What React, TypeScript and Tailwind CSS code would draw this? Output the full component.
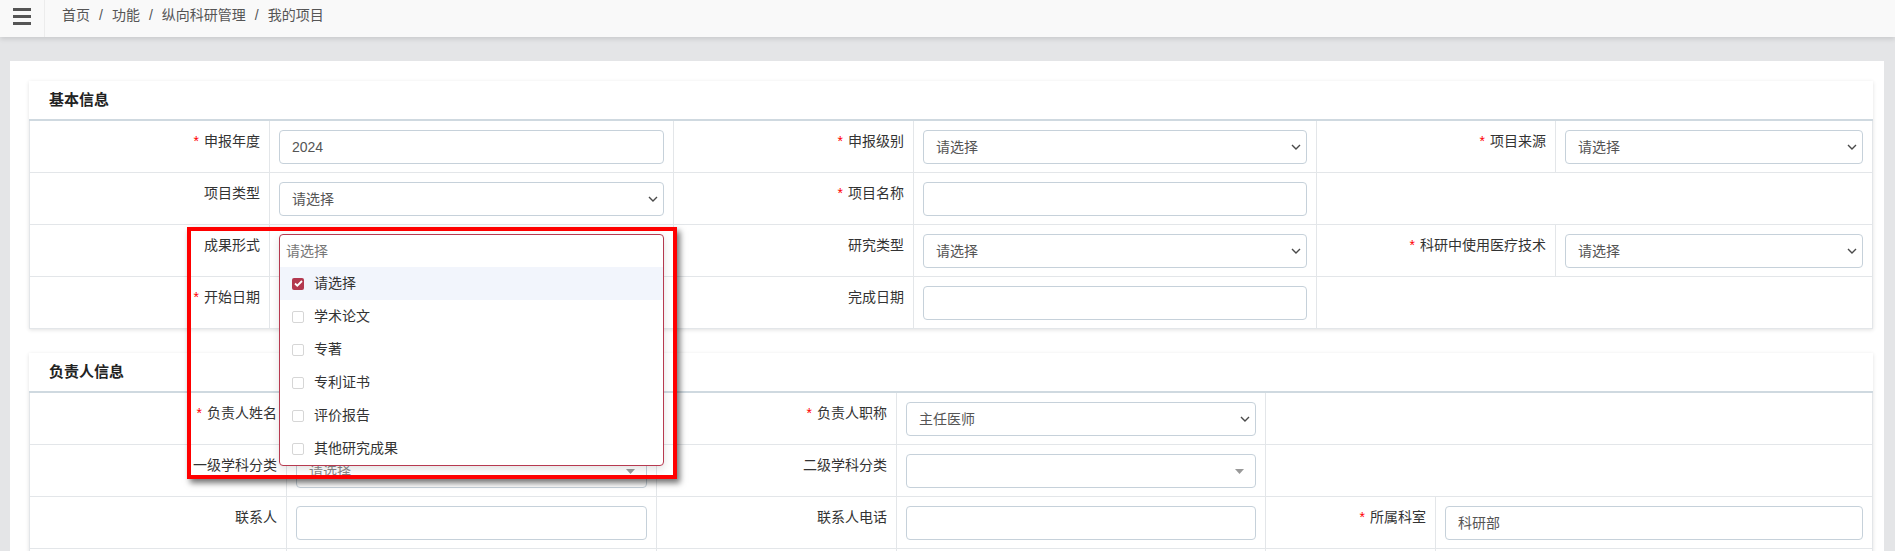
import React from "react";

const B = "border-[#e3e6e9]";

function Req() {
  return <span className="text-[#ff0000] mr-[5px]">*</span>;
}

function Label({ text, req }: { text: string; req?: boolean }) {
  return (
    <div className="border-r border-b border-[#e3e6e9] pr-[9px] pt-[10px] text-right text-[14px] leading-[20px] text-[#333] whitespace-nowrap">
      {req && <Req />}
      {text}
    </div>
  );
}

function Field({ children, last, relative }: { children?: React.ReactNode; last?: boolean; relative?: boolean }) {
  return (
    <div
      className={`border-b border-[#e3e6e9] pt-[9px] pb-[8px] px-[9px] ${last ? "" : "border-r"} ${relative ? "relative" : ""}`}
    >
      {children}
    </div>
  );
}

function Span2() {
  return <div className="col-span-2 border-b border-[#e3e6e9] h-[52px]" />;
}

function TextBox({ value }: { value?: string }) {
  return (
    <div className="h-[34px] rounded-[4px] border border-[#c6d1da] px-[12px] flex items-center text-[14px] text-[#555]">
      {value}
    </div>
  );
}

function SelectBox({ value }: { value: string }) {
  return (
    <div className="h-[34px] rounded-[4px] border border-[#c6d1da] pl-[12px] pr-[5px] flex items-center justify-between text-[14px] text-[#555]">
      <span>{value}</span>
      <svg width="10" height="6" viewBox="0 0 10 6">
        <path d="M1 1l4 4 4-4" stroke="#4a4a4a" strokeWidth="1.4" fill="none" />
      </svg>
    </div>
  );
}

function Select2({ value }: { value?: string }) {
  return (
    <div className="h-[34px] rounded-[4px] border border-[#c6d1da] pl-[12px] pr-[11px] flex items-center justify-between text-[14px] text-[#888]">
      <span>{value}</span>
      <svg width="9" height="5" viewBox="0 0 9 5">
        <path d="M0 0h9L4.5 5z" fill="#999" />
      </svg>
    </div>
  );
}

function Card({ title, cols, children, className = "" }: { title: string; cols: string; children: React.ReactNode; className?: string }) {
  return (
    <div className={`bg-white shadow-[0_1px_4px_rgba(0,0,0,0.12)] ${className}`}>
      <div className="h-[40px] border-b-2 border-[#cfd9e0] pl-[20px] flex items-center text-[15px] font-bold text-[#222]">
        {title}
      </div>
      <div className={`grid border-l border-r ${B} ${cols}`}>{children}</div>
    </div>
  );
}

function Checkbox({ checked }: { checked?: boolean }) {
  if (checked)
    return (
      <span className="w-[12px] h-[12px] rounded-[2px] bg-[#b3384e] flex items-center justify-center">
        <svg width="9" height="7" viewBox="0 0 9 7">
          <path d="M1 3.5l2.3 2.2L8 1" stroke="#fff" strokeWidth="1.8" fill="none" />
        </svg>
      </span>
    );
  return <span className="w-[12px] h-[12px] rounded-[2px] border border-[#d6d6d6] bg-white" />;
}

const OPTIONS = ["请选择", "学术论文", "专著", "专利证书", "评价报告", "其他研究成果"];

function Dropdown() {
  return (
    <div className="absolute left-[9px] top-[9px] w-[385px] z-20 bg-white border border-[#b73a50] rounded-[4px] shadow-[0_3px_8px_rgba(0,0,0,0.12)] text-[14px]">
      <div className="h-[32px] flex items-center pl-[6px] text-[#777] shadow-[0_2px_3px_rgba(0,0,0,0.04)]">请选择</div>
      {OPTIONS.map((o, i) => (
        <div key={o} className={`h-[33px] flex items-center pl-[12px] ${i === 0 ? "bg-[#f2f5fc]" : ""}`}>
          <Checkbox checked={i === 0} />
          <span className="ml-[10px] text-[#333]">{o}</span>
        </div>
      ))}
    </div>
  );
}

export default function App() {
  return (
    <div className="relative h-[551px] w-[1895px] overflow-hidden bg-[#e4e5e7] font-['Liberation_Sans','Noto_Sans_CJK_SC',sans-serif]">
      <header className="relative z-10 h-[37px] bg-[#f9f9f9] flex shadow-[0_2px_5px_rgba(0,0,0,0.12)]">
        <div className="w-[45px] border-r border-[#ececec] flex flex-col gap-[4px] pt-[8px] pl-[13px]">
          <span className="block w-[18px] h-[3px] bg-[#555]" />
          <span className="block w-[18px] h-[3px] bg-[#555]" />
          <span className="block w-[18px] h-[3px] bg-[#555]" />
        </div>
        <nav className="pl-[17px] pt-[5px] text-[14px] leading-[20px] text-[#555] flex">
          <span>首页</span>
          <span className="px-[9px]">/</span>
          <span>功能</span>
          <span className="px-[9px]">/</span>
          <span>纵向科研管理</span>
          <span className="px-[9px]">/</span>
          <span>我的项目</span>
        </nav>
      </header>

      <div className="mt-[24px] ml-[10px] mr-[11px] h-[600px] bg-white pt-[20px] pl-[19px] pr-[11px]">
        <Card title="基本信息" cols="grid-cols-[240px_404px_240px_403px_239px_1fr]">
          <Label text="申报年度" req />
          <Field>
            <TextBox value="2024" />
          </Field>
          <Label text="申报级别" req />
          <Field>
            <SelectBox value="请选择" />
          </Field>
          <Label text="项目来源" req />
          <Field last>
            <SelectBox value="请选择" />
          </Field>

          <Label text="项目类型" />
          <Field>
            <SelectBox value="请选择" />
          </Field>
          <Label text="项目名称" req />
          <Field>
            <TextBox />
          </Field>
          <Span2 />

          <Label text="成果形式" />
          <Field relative>
            <div className="h-[34px]" />
            <Dropdown />
          </Field>
          <Label text="研究类型" />
          <Field>
            <SelectBox value="请选择" />
          </Field>
          <Label text="科研中使用医疗技术" req />
          <Field last>
            <SelectBox value="请选择" />
          </Field>

          <Label text="开始日期" req />
          <Field>
            <TextBox />
          </Field>
          <Label text="完成日期" />
          <Field>
            <TextBox />
          </Field>
          <Span2 />
        </Card>

        <Card title="负责人信息" className="mt-[24px]" cols="grid-cols-[257px_370px_240px_369px_170px_1fr]">
          <Label text="负责人姓名" req />
          <Field>
            <TextBox />
          </Field>
          <Label text="负责人职称" req />
          <Field>
            <SelectBox value="主任医师" />
          </Field>
          <Span2 />

          <Label text="一级学科分类" />
          <Field>
            <Select2 value="请选择" />
          </Field>
          <Label text="二级学科分类" />
          <Field>
            <Select2 />
          </Field>
          <Span2 />

          <Label text="联系人" />
          <Field>
            <TextBox />
          </Field>
          <Label text="联系人电话" />
          <Field>
            <TextBox />
          </Field>
          <Label text="所属科室" req />
          <Field last>
            <TextBox value="科研部" />
          </Field>

          <Label text="" />
          <Field>
            <TextBox />
          </Field>
          <Label text="" />
          <Field>
            <TextBox />
          </Field>
          <Label text="" />
          <Field last>
            <TextBox />
          </Field>
        </Card>
      </div>

      <div className="absolute left-[187px] top-[227px] w-[490px] h-[252px] z-30 border-[4px] border-[#ff0000] shadow-[3px_4px_6px_rgba(0,0,0,0.55)] pointer-events-none" />
    </div>
  );
}
